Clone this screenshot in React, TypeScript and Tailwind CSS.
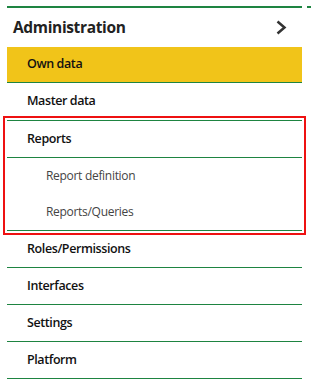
const items = ["Roles/Permissions", "Interfaces", "Settings", "Platform"];

function Chevron() {
  return (
    <svg width="11" height="15" viewBox="0 0 11 15" fill="none">
      <polyline points="1.5,1.5 8.5,7.5 1.5,13.5" stroke="#333" strokeWidth="2.5" strokeLinejoin="miter" />
    </svg>
  );
}

export default function App() {
  return (
    <div className="relative h-[383px] w-[311px] bg-white pt-[6px] font-['Open_Sans',sans-serif]">
      <div className="absolute right-0 top-[6px] h-[2px] w-[4px] bg-[#1e8441]" />
      <div className="ml-[7px] w-[295px]">
        <div className="border-t-2 border-[#1e8441]">
          <div className="flex h-[39px] items-center justify-between pl-[6px] pr-[15px]">
            <span className="text-[15.5px] font-bold tracking-[-0.35px] text-[#222]">Administration</span>
            <Chevron />
          </div>
        </div>

        <div className="flex h-[36px] items-center border-b border-[#1e8441] bg-[#f1c419] pl-[20px] text-[12.5px] font-semibold tracking-[-0.4px] text-[#111]">
          Own data
        </div>

        <div className="flex h-[37px] items-center pl-[20px] text-[12.5px] font-semibold tracking-[-0.4px] text-[#111]">
          Master data
        </div>

        {/* Reports group, highlighted */}
        <div className="border-y border-[#1e8441] outline-2 outline-offset-2 outline-[#ee1111]">
          <div className="flex h-[37px] items-center border-b border-[#1e8441] pl-[20px] text-[12.5px] font-semibold tracking-[-0.4px] text-[#111]">
            Reports
          </div>
          <div className="flex h-[36px] items-center pl-[39px] text-[12px] tracking-[-0.3px] text-[#444]">Report definition</div>
          <div className="flex h-[36px] items-center pl-[39px] text-[12px] tracking-[-0.3px] text-[#444]">Reports/Queries</div>
        </div>

        {items.map((label) => (
          <div
            key={label}
            className="flex h-[37px] items-center border-b border-[#1e8441] pl-[20px] text-[12.5px] font-semibold tracking-[-0.4px] text-[#111]"
          >
            {label}
          </div>
        ))}
      </div>
    </div>
  );
}
